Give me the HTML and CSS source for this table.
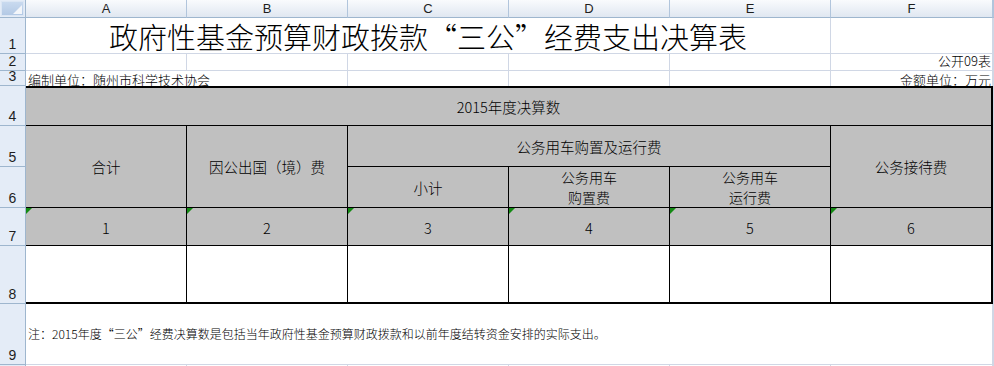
FILE: index.html
```html
<!DOCTYPE html>
<html lang="zh-CN">
<head>
<meta charset="utf-8">
<title>政府性基金预算财政拨款“三公”经费支出决算表</title>
<link rel="stylesheet" href="styles.css">
</head>
<body>
<div class="sheet">
  <div class="corner"><div class="corner-box"><svg class="corner-tri" width="9" height="9" viewBox="0 0 9 9"><polygon points="9,0 9,9 0,9" fill="#f3f6fa"/></svg></div></div>
  <div class="ch">A</div>
  <div class="ch">B</div>
  <div class="ch">C</div>
  <div class="ch">D</div>
  <div class="ch">E</div>
  <div class="ch">F</div>
  <div class="ch"></div>

  <div class="rh">1</div>
  <div class="g title span5">政府性基金预算财政拨款“三公”经费支出决算表</div>
  <div class="g"></div>
  <div class="g"></div>

  <div class="rh">2</div>
  <div class="g"></div>
  <div class="g"></div>
  <div class="g"></div>
  <div class="g"></div>
  <div class="g"></div>
  <div class="g txt r2 right">公开09表</div>
  <div class="g"></div>

  <div class="rh">3</div>
  <div class="c3 txt r3 span2">编制单位：随州市科学技术协会</div>
  <div class="c3"></div>
  <div class="c3"></div>
  <div class="c3"></div>
  <div class="c3 txt r3 right">金额单位：万元</div>
  <div class="c3"></div>

  <div class="rh">4</div>
  <div class="t t-top t-last span6">2015年度决算数</div>
  <div class="g"></div>

  <div class="rh">5</div>
  <div class="t rspan2">合计</div>
  <div class="t rspan2">因公出国（境）费</div>
  <div class="t span3">公务用车购置及运行费</div>
  <div class="t t-last rspan2">公务接待费</div>
  <div class="g"></div>

  <div class="rh">6</div>
  <div class="t">小计</div>
  <div class="t two">公务用车<br>购置费</div>
  <div class="t two">公务用车<br>运行费</div>
  <div class="g"></div>

  <div class="rh">7</div>
  <div class="t num flag">1</div>
  <div class="t num flag">2</div>
  <div class="t num flag">3</div>
  <div class="t num flag">4</div>
  <div class="t num flag">5</div>
  <div class="t num flag t-last">6</div>
  <div class="g"></div>

  <div class="rh">8</div>
  <div class="t t-white"></div>
  <div class="t t-white"></div>
  <div class="t t-white"></div>
  <div class="t t-white"></div>
  <div class="t t-white"></div>
  <div class="t t-white t-last"></div>
  <div class="g"></div>

  <div class="rh">9</div>
  <div class="g note span6">注：2015年度“三公”经费决算数是包括当年政府性基金预算财政拨款和以前年度结转资金安排的实际支出。</div>
  <div class="g"></div>

  <div class="rh"></div>
  <div class="g"></div>
  <div class="g"></div>
  <div class="g"></div>
  <div class="g"></div>
  <div class="g"></div>
  <div class="g"></div>
  <div class="g"></div>
</div>
</body>
</html>
```
FILE: styles.css
```css
* {
  box-sizing: border-box;
  margin: 0;
  padding: 0;
}

html, body {
  width: 994px;
  height: 366px;
  overflow: hidden;
  background: #ffffff;
}

body {
  font-family: "Noto Sans CJK SC", "Liberation Sans", sans-serif;
  font-weight: 300;
  color: #000000;
}

.sheet {
  display: grid;
  grid-template-columns: 26px repeat(5, 161px) 162px 1fr;
  grid-template-rows: 18px 36px 17px 15px 40px 41px 41px 38px 58px 61px 1fr;
  width: 994px;
  height: 366px;
}

/* headers */
.corner {
  background: #e4ecf7;
  border-right: 1px solid #9eb6ce;
  border-bottom: 1px solid #9eb6ce;
  padding: 1px;
}

.corner-box {
  height: 100%;
  background: linear-gradient(#c9daef, #b3c9e5);
  border: 1px solid #dbe6f4;
  display: flex;
  align-items: flex-end;
  justify-content: flex-end;
  padding: 0 1px 1px 0;
}

.corner-tri {
  display: block;
}

.ch {
  background: linear-gradient(#f9fbfd, #e0e7f1);
  border-right: 1px solid #b1c5dc;
  border-bottom: 1px solid #9eb6ce;
  font-family: "Liberation Sans", sans-serif;
  font-weight: 400;
  font-size: 13px;
  color: #1e1e1e;
  display: flex;
  align-items: center;
  justify-content: center;
}

.rh {
  background: #e4ecf7;
  border-right: 1px solid #9eb6ce;
  border-bottom: 1px solid #9eb6ce;
  font-family: "Liberation Sans", sans-serif;
  font-weight: 400;
  font-size: 14px;
  line-height: 15px;
  color: #1e1e1e;
  display: flex;
  align-items: flex-end;
  justify-content: center;
  padding-bottom: 1px;
}

/* ordinary grid cells */
.g {
  border-right: 1px solid #d0d7e5;
  border-bottom: 1px solid #d0d7e5;
}

.c3 {
  border-right: 1px solid #d0d7e5;
}

.txt {
  font-size: 13px;
  line-height: 13px;
  display: flex;
  white-space: nowrap;
}

.r2 {
  align-items: flex-start;
}

.r3 {
  align-items: flex-end;
}

.c3.txt {
  padding-left: 2px;
}

.right {
  justify-content: flex-end;
  padding-right: 1px;
}

.title {
  font-size: 29px;
  line-height: 34px;
  display: flex;
  align-items: center;
  justify-content: center;
  white-space: nowrap;
  padding-top: 1px;
}

.note {
  font-size: 12px;
  line-height: 14px;
  display: flex;
  align-items: center;
  white-space: nowrap;
  padding-left: 2px;
}

/* table */
.t {
  position: relative;
  background: #c0c0c0;
  border-right: 1px solid #000000;
  border-bottom: 1px solid #000000;
  font-size: 14.5px;
  line-height: 17px;
  display: flex;
  align-items: center;
  justify-content: center;
  text-align: center;
}

.two {
  font-size: 14px;
  line-height: 20px;
}

.t-top {
  border-top: 2px solid #000000;
}

.t-last {
  border-right: 2px solid #000000;
}

.t-white {
  background: #ffffff;
  border-bottom: 2px solid #000000;
}

.num {
  padding-top: 2px;
}

.flag::before {
  content: "";
  position: absolute;
  top: 0;
  left: 0;
  border-top: 6px solid #138a13;
  border-right: 6px solid transparent;
}

.span2 { grid-column: span 2; }
.span3 { grid-column: span 3; }
.span5 { grid-column: span 5; }
.span6 { grid-column: span 6; }
.rspan2 { grid-row: span 2; }
```
